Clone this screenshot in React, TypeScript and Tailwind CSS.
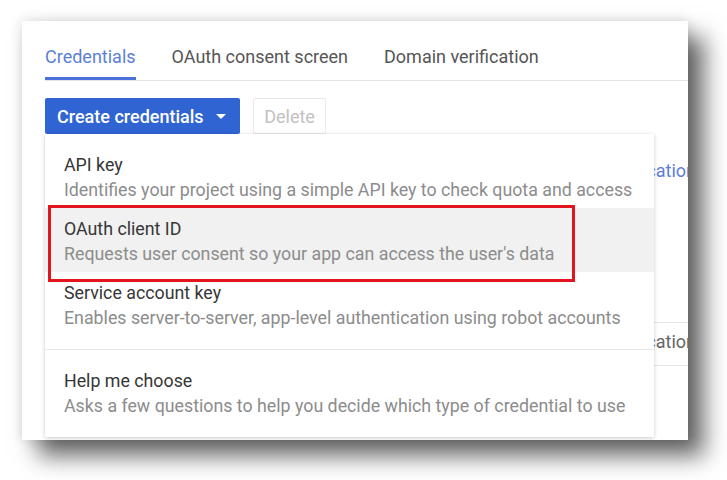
import React from "react";

type MenuItem = {
    title: string;
    desc: string;
    active?: boolean;
};

const items: MenuItem[] = [
    { title: "API key", desc: "Identifies your project using a simple API key to check quota and access" },
    { title: "OAuth client ID", desc: "Requests user consent so your app can access the user's data", active: true },
    { title: "Service account key", desc: "Enables server-to-server, app-level authentication using robot accounts" },
];

function MenuRow({ item }: { item: MenuItem }) {
    return (
        <div className={`pl-[19px] pt-[8px] pb-[6px] ${item.active ? "bg-[#f1f1f1]" : ""}`}>
            <div className="text-[17.8px] leading-[25px] text-[#363636]">{item.title}</div>
            <div className="text-[17.8px] leading-[25px] text-[#8c8c8c]">{item.desc}</div>
        </div>
    );
}

function Tabs() {
    const tabs = ["Credentials", "OAuth consent screen", "Domain verification"];
    return (
        <div className="flex gap-[36px] pt-[26px] border-b border-[#e4e4e4]">
            {tabs.map((t, i) => (
                <div
                    key={t}
                    className={`pb-[10px] border-b-[3px] text-[18px] leading-[20px] ${
                        i === 0 ? "border-[#4a70d9] text-[#5b7fd8]" : "border-transparent text-[#555]"
                    }`}
                >
                    {t}
                </div>
            ))}
        </div>
    );
}

export default function App() {
    return (
        <div
            className="w-[727px] h-[480px] bg-white pl-[22px] pt-[21px] overflow-hidden"
            style={{ fontFamily: "Roboto, 'Liberation Sans', sans-serif" }}
        >
            <div className="relative w-[666px] h-[419px] bg-white overflow-hidden shadow-[16px_16px_22px_rgba(0,0,0,0.6),0_0_12px_rgba(0,0,0,0.15)] pl-[23px]">
                <Tabs />

                {/* toolbar */}
                <div className="flex gap-[13px] mt-[17px]">
                    <button className="flex items-center h-[36px] w-[195px] pl-[12px] rounded-[2px] bg-[#2f64d2] text-white text-[18px] font-medium">
                        Create credentials
                        <svg width="10" height="5" viewBox="0 0 10 5" className="ml-[12px]">
                            <path d="M0 0 L10 0 L5 5 Z" fill="#fff" />
                        </svg>
                    </button>
                    <button className="h-[36px] w-[73px] rounded-[2px] border border-[#e8e8e8] text-[#c2c2c2] text-[18px]">
                        Delete
                    </button>
                </div>

                {/* page content behind the menu */}
                <div className="flex justify-end mt-[25px] -mr-[8px] text-[18px] leading-[24px] text-[#5b7fd8]">
                    Application
                </div>
                <div className="mt-[139px] border-t border-b border-[#e8e8e8] h-[44px] pt-[7px] flex justify-end -mr-[8px] text-[18px] leading-[24px] text-[#666]">
                    Application
                </div>

                {/* dropdown */}
                <div className="absolute left-[23px] top-[113px] w-[609px] h-[303px] bg-white shadow-[0_1px_4px_rgba(0,0,0,0.22)] pt-[10px]">
                    <div className="pb-[13px]">
                        {items.map((it) => (
                            <MenuRow key={it.title} item={it} />
                        ))}
                    </div>
                    <div className="border-t border-[#e8e8e8] pt-[10px]">
                        <MenuRow item={{ title: "Help me choose", desc: "Asks a few questions to help you decide which type of credential to use" }} />
                    </div>
                </div>

                {/* red annotation box */}
                <div className="absolute left-[26px] top-[184px] w-[527px] h-[77px] border-[3px] border-[#e2141d]" />
            </div>
        </div>
    );
}
